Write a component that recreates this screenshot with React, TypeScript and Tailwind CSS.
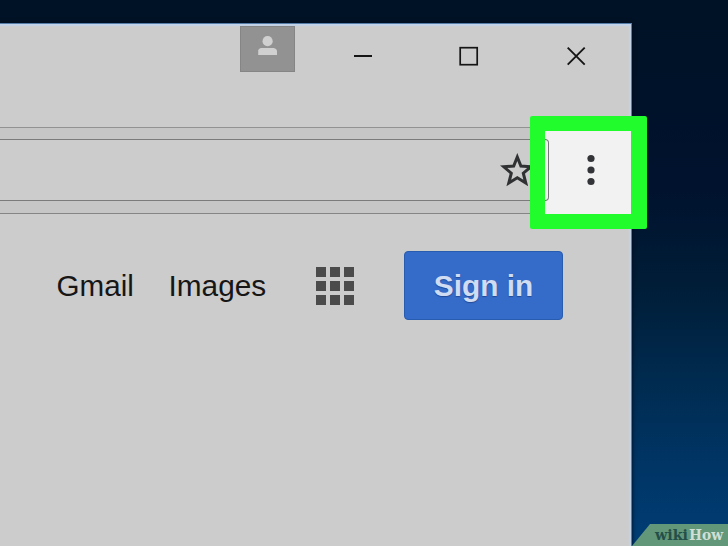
function TitleBar() {
  return (
    <div className="flex h-[103px] items-start">
      <div className="ml-[240px] mt-0.5 flex h-[46px] w-[55px] justify-center border border-[#858585] bg-[#939292]">
        <svg className="mt-[9px] h-[20px] w-[20px]" viewBox="0 0 20 20" fill="#d0d0d0">
          <circle cx="9.6" cy="5.2" r="5.1" />
          <path d="M0.2 19V14.6Q0.4 12.6 2.8 12.1H15.8Q18.6 12.6 19 14.6V19Z" />
        </svg>
      </div>
      <div className="ml-[59px] mt-[31px] h-[2px] w-[18px] bg-[#151515]" />
      <svg className="ml-[87px] mt-[22px] h-[20px] w-[20px]" viewBox="0 0 20 20" fill="none" stroke="#151515" strokeWidth="1.7">
        <rect x="1.2" y="1.7" width="17" height="17" />
      </svg>
      <svg className="ml-[88px] mt-[23px] h-[19px] w-[19px]" viewBox="0 0 19 19" fill="none" stroke="#151515" strokeWidth="1.9">
        <path d="M0.7 0.7L17.7 17.7M17.7 0.7L0.7 17.7" />
      </svg>
    </div>
  );
}

function Toolbar() {
  return (
    <div className="flex h-[87px] flex-col border-y border-t-[#929292] border-b-[#858585] bg-[#c6c6c6] pt-[11px]">
      <div className="flex h-[62px] w-[549px] items-center justify-end rounded-r-[4px] border border-l-0 border-[#7b7b7b] bg-[#cccccc] pr-[14px]">
        <svg className="h-[34px] w-[34px]" viewBox="0 0 34 34" fill="none" stroke="#303133" strokeWidth="3">
          <path d="M17.3 4L20.9 13L31 13.7L23.3 20.2L25.8 30.1L17.3 24.8L8.8 30.1L11.3 20.2L3.6 13.7L13.7 13Z" />
        </svg>
      </div>
    </div>
  );
}

function AppsGrid() {
  return (
    <div className="ml-[50px] grid grid-cols-3 gap-[4px]">
      {Array.from({ length: 9 }, (_, i) => (
        <div key={i} className="h-[10px] w-[10px] bg-[#4b4b4b]" />
      ))}
    </div>
  );
}

function PageHeader() {
  return (
    <div className="mt-[37px] flex h-[69px] items-center text-[30px] leading-none text-[#161616]">
      <span className="ml-[56.5px] w-[79px] text-[29.6px]">Gmail</span>
      <span className="ml-[33px] w-[97.5px] whitespace-nowrap text-[29.8px]">Images</span>
      <AppsGrid />
      <button className="ml-[50px] flex h-[69px] w-[159px] items-center justify-center rounded-[4px] border border-[#285cb1] bg-[#356bc9] text-[29.8px] font-bold text-[#d0dcf2] [text-shadow:0_1px_1px_#234b94]">
        Sign in
      </button>
    </div>
  );
}

function MenuHighlight() {
  return (
    <div className="absolute left-[530px] top-[116px] flex h-[113px] w-[117px] overflow-hidden rounded-[2px] border-[15px] border-r-[16px] border-[#20fc2c] bg-[#f2f2f2]">
      <div className="mt-[8px] h-[62px] w-[4px] rounded-r-[4px] border border-l-0 border-[#777777] bg-[#f5f5f5]" />
      <svg className="ml-[38px] mt-[22px] h-[34px] w-[8px]" viewBox="0 0 8 34" fill="#333438">
        <circle cx="4" cy="5.5" r="3.6" />
        <circle cx="4" cy="17" r="3.6" />
        <circle cx="4" cy="28.5" r="3.6" />
      </svg>
    </div>
  );
}

function Watermark() {
  return (
    <div className="absolute bottom-0 right-0 flex h-[22px] w-[96px] items-center bg-[#629779] pl-[23px] font-['DejaVu_Serif',serif] font-bold leading-none [clip-path:polygon(18px_0,100%_0,100%_100%,0_100%)]">
      <svg className="h-[22px] w-[73px] overflow-visible" viewBox="0 0 73 22">
        <text x="0" y="16" textLength="33" lengthAdjust="spacingAndGlyphs" fontSize="15" fill="#244f49">wiki</text>
        <text x="34" y="16" textLength="34" lengthAdjust="spacingAndGlyphs" fontSize="15" fill="#d0dfd6">How</text>
      </svg>
    </div>
  );
}

export default function App() {
  return (
    <div className="relative h-[546px] w-[728px] overflow-hidden bg-[linear-gradient(180deg,#001225_0%,#00122e_35%,#001d37_52%,#002b50_70%,#003565_85%,#003d75_100%)] pt-[23px] font-['Liberation_Sans',sans-serif]">
      <div className="h-[523px] w-[632px] border-r border-t border-[#547da9] bg-[#cccccc] shadow-[inset_-2px_2px_1px_#c3d2e7,0_0_4px_#000b1b]">
        <TitleBar />
        <Toolbar />
        <PageHeader />
      </div>
      <MenuHighlight />
      <Watermark />
    </div>
  );
}
